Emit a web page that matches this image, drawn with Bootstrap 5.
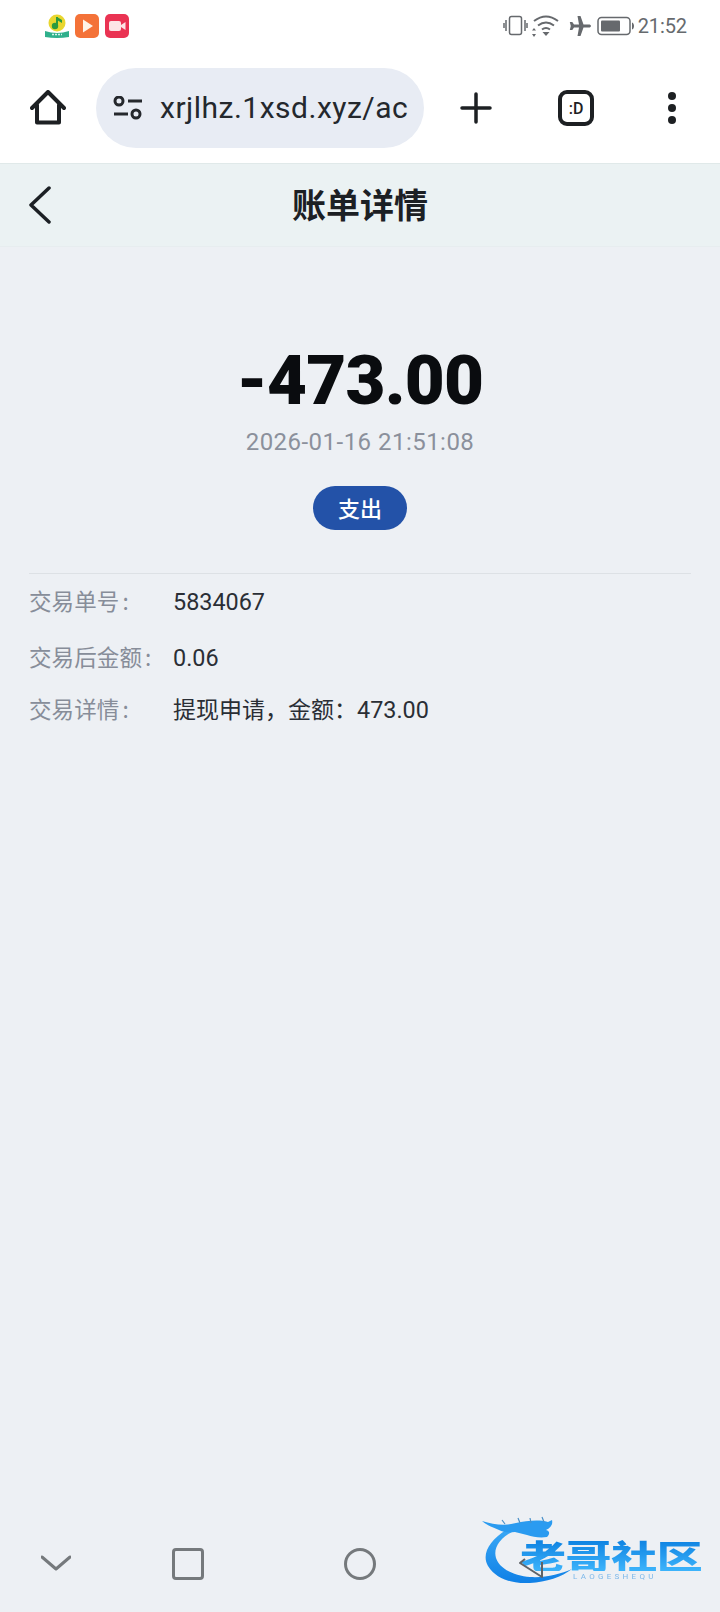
<!DOCTYPE html>
<html lang="zh-CN">
<head>
<meta charset="utf-8">
<title>账单详情</title>
<link href="https://cdn.jsdelivr.net/npm/bootstrap@5.3.0/dist/css/bootstrap.min.css" rel="stylesheet">
<style>
html,body{margin:0;height:100%}
body{width:720px;height:1612px;overflow:hidden;background:#edf0f4;font-family:Roboto,"Noto Sans CJK SC",sans-serif;position:relative}
.cjk{font-family:"Noto Sans CJK SC",Roboto,sans-serif}
.statusbar{height:52px;background:#fff;padding:14px 33px 0 45px}
.noti-gap{gap:6px}
.stat-wifi{margin-left:3px}
.stat-plane{margin-left:10px}
.stat-batt{margin-left:6px}
.stat-time{font-size:20px;line-height:24px;color:#666a6e;margin-left:3px;letter-spacing:-.1px}
.toolbar{height:112px;background:#fff;border-bottom:1px solid #e0e9e9;padding-left:30px}
.urlpill{width:328px;height:80px;border-radius:40px;background:#e8ecf4;margin-left:30px;padding-left:17px;overflow:hidden}
.urltext{font-size:30px;color:#24282d;white-space:nowrap;width:248px;overflow:hidden;margin-left:17px;line-height:40px;letter-spacing:.5px}
.tool-plus{margin-left:36px}
.tool-tab{margin-left:66px}
.tool-dots{margin-left:73px}
.pageheader{height:83px;background:#ebf2f3;border-bottom:1px solid #e7edef;padding-left:29px;position:relative}
.pagetitle{font-size:34px;font-weight:700;color:#1c2024;position:absolute;left:0;right:0;top:15px;line-height:50px;text-align:center;margin:0}
.mainarea{padding:0 29px}
.amountbox{padding-top:84px;height:326px}
.amounttext{font-size:69px;font-weight:900;color:#0a0c0f;line-height:100px;letter-spacing:-.8px}
.datetext{font-size:24px;line-height:32px;color:#8b909c;margin-top:-5px;letter-spacing:.47px}
.kindpill{width:94px;height:44px;border-radius:22px;background:#2352a8;color:#fff;font-size:22px;font-weight:500;line-height:42px;margin-top:28px}
.divline{border-top:1px solid #dde1e5}
.inforow{font-size:22.5px;line-height:32px;color:#2a2e35}
.inforow-a{margin-top:10px}
.inforow-b{margin-top:22px}
.inforow-c{margin-top:18px}
.infolabel{width:144px;color:#878d99;flex:none;letter-spacing:.1px}
.labelcolon{margin-left:3px}
.detailvalue{font-size:23px}
.numtext{font-family:Roboto,sans-serif;font-size:23.4px}
.navbar-sys{height:112px;padding:48px 0 0 41px;margin-top:auto;position:relative;z-index:2}
.nav-sq{margin-left:101px}
.nav-ci{margin-left:140px}
.nav-tri{margin-left:143px;margin-top:-1px}
.watermark{position:absolute;left:482px;top:1512px;width:226px;height:76px;z-index:1;filter:blur(.5px)}
.wm-title{position:absolute;left:38px;top:26px;font-size:46px;line-height:46px;font-weight:900;white-space:nowrap;letter-spacing:-.4px;transform:scaleY(.72);transform-origin:top left;background:linear-gradient(180deg,#0b7fe0,#3db4fb);-webkit-background-clip:text;background-clip:text;color:transparent}
.wm-sub{position:absolute;left:91px;top:61px;font-size:8px;line-height:8px;letter-spacing:3.3px;color:#7db8ea;white-space:nowrap}
</style>
</head>
<body class="d-flex flex-column">
<div class="statusbar d-flex justify-content-between">
  <div class="d-flex noti-gap">
    <svg width="24" height="24" viewBox="0 0 24 24"><circle cx="12" cy="9" r="8.500" fill="#e9d62f"/><path d="M0 17q12 4 24 0v6q-12 2-24 0z" fill="#2fb08c"/><path d="M7 20.500h10" stroke="#d8f3ea" stroke-width="1.500" stroke-dasharray="2 1"/><path d="M12 3v9" stroke="#2b9a3e" stroke-width="2"/><circle cx="10" cy="12" r="3.200" fill="#2b9a3e"/><path d="M12 3l5 3v3l-5-3z" fill="#2b9a3e"/></svg>
    <svg width="24" height="24" viewBox="0 0 24 24"><rect width="24" height="24" rx="5" fill="#f47238"/><path d="M8 5.500l10 6.500-10 6.500z" fill="#fff3e8"/></svg>
    <svg width="24" height="24" viewBox="0 0 24 24"><rect width="24" height="24" rx="5" fill="#ea3353"/><rect x="4" y="7" width="12" height="10" rx="2" fill="#fde4e6"/><path d="M16 11l4.500-3v8L16 13z" fill="#fde4e6"/></svg>
  </div>
  <div class="d-flex">
    <svg width="25" height="24" viewBox="0 0 25 24" fill="none" stroke="#66696d" stroke-width="1.500"><rect x="6.500" y="2.500" width="12" height="18" rx="2"/><path d="M3 6v11M1 9v5M22 6v11M24 9v5"/></svg>
    <svg class="stat-wifi" width="28" height="24" viewBox="0 0 28 24" fill="none" stroke="#66696d" stroke-width="2"><path d="M3 7q12-9 24 0M7 11.500q8-6 16 0M11 15.500q4-3 8 0"/><path d="M15 22l-3.500-4h7z" fill="#66696d" stroke="none"/><path d="M3 14l-2 2.500h4zM3 23l-2-3h4z" fill="#66696d" stroke="none"/></svg>
    <svg class="stat-plane" width="22" height="24" viewBox="0 0 22 24"><path d="M8.500 2h3l3 8.500h5.500c1 0 2 .7 2 1.500s-1 1.500-2 1.500h-5.500l-3 8.500h-3l1.500-8.500h-5l-1.700 2.500H.800l1-4-1-4h2.500l1.700 2.500h5z" fill="#66696d"/></svg>
    <svg class="stat-batt" width="38" height="24" viewBox="0 0 38 24" fill="none"><rect x="1" y="3.500" width="32" height="17" rx="3.500" stroke="#66696d" stroke-width="1.500"/><rect x="4" y="6.500" width="19" height="11" rx="1" fill="#66696d"/><path d="M35 8.500c1.500.5 2 2 2 3.500s-.5 3-2 3.500z" fill="#66696d"/></svg>
    <div class="stat-time">21:52</div>
  </div>
</div>
<div class="toolbar d-flex align-items-center">
  <svg width="36" height="36" viewBox="0 0 36 36" fill="none" stroke="#1d2023" stroke-width="4" stroke-linejoin="round" stroke-linecap="round"><path d="M2 18L18 2l16 16"/><path d="M7 15v17.500h22V15"/></svg>
  <div class="urlpill d-flex align-items-center">
    <svg width="30" height="24" viewBox="0 0 30 24" fill="none" stroke="#25282d" stroke-width="3"><circle cx="6" cy="5" r="4"/><path d="M15 5h14M1 18h14"/><circle cx="23" cy="18" r="4"/></svg>
    <div class="urltext">xrjlhz.1xsd.xyz/ac</div>
  </div>
  <svg class="tool-plus" width="32" height="32" viewBox="0 0 32 32" stroke="#1d2023" stroke-width="3.500" stroke-linecap="round"><path d="M16 2v28M2 16h28"/></svg>
  <svg class="tool-tab" width="36" height="36" viewBox="0 0 36 36"><rect x="2" y="2" width="32" height="32" rx="7" fill="none" stroke="#1d2023" stroke-width="4"/><text x="18" y="24" text-anchor="middle" font-family="Roboto,sans-serif" font-size="16" font-weight="500" fill="#1d2023">:D</text></svg>
  <svg class="tool-dots" width="10" height="34" viewBox="0 0 10 34" fill="#1d2023"><circle cx="5" cy="5" r="4"/><circle cx="5" cy="17" r="4"/><circle cx="5" cy="29" r="4"/></svg>
</div>
<header class="pageheader d-flex align-items-center">
  <svg width="22" height="38" viewBox="0 0 22 38" fill="none" stroke="#1c2024" stroke-width="3.500" stroke-linecap="round" stroke-linejoin="round"><path d="M20 2L2 19l18 17"/></svg>
  <h1 class="pagetitle cjk">账单详情</h1>
</header>
<main class="mainarea">
  <section class="amountbox text-center d-flex flex-column align-items-center">
    <div class="amounttext">-473.00</div>
    <div class="datetext">2026-01-16 21:51:08</div>
    <div class="kindpill cjk">支出</div>
  </section>
  <div class="divline"></div>
  <div class="inforow inforow-a d-flex align-items-baseline cjk"><span class="infolabel">交易单号<span class="labelcolon">:</span></span><span class="numtext">5834067</span></div>
  <div class="inforow inforow-b d-flex align-items-baseline cjk"><span class="infolabel">交易后金额<span class="labelcolon">:</span></span><span class="numtext">0.06</span></div>
  <div class="inforow inforow-c d-flex align-items-baseline cjk"><span class="infolabel">交易详情<span class="labelcolon">:</span></span><span class="detailvalue">提现申请&#xFF0C;金额&#xFF1A;<span class="numtext">473.00</span></span></div>
</main>
<nav class="navbar-sys d-flex align-items-start">
  <svg width="30" height="32" viewBox="0 0 30 32" fill="none" stroke="#75797c" stroke-width="3" stroke-linecap="round" stroke-linejoin="round"><path d="M1 9l14 12 14-12"/></svg>
  <svg class="nav-sq" width="32" height="32" viewBox="0 0 32 32" fill="none" stroke="#75797c" stroke-width="3"><rect x="1.500" y="1.500" width="29" height="29" rx="2.500"/></svg>
  <svg class="nav-ci" width="32" height="32" viewBox="0 0 32 32" fill="none" stroke="#75797c" stroke-width="3"><circle cx="16" cy="16" r="14.500"/></svg>
  <svg class="nav-tri" width="26" height="32" viewBox="0 0 26 32" fill="none" stroke="#5f6367" stroke-width="2" stroke-linejoin="round"><path d="M6 12l-5 4 22 14v-15"/></svg>
</nav>
<div class="watermark">
  <svg width="226" height="76" viewBox="0 0 226 76" class="d-block">
    <defs><linearGradient id="wmg" x1="0" y1="0" x2="0" y2="1"><stop offset="0" stop-color="#3aa8f5"/><stop offset="1" stop-color="#0f80e6"/></linearGradient></defs>
    <path d="M24 18C8 28-1 42 6 54c8 13 24 18 42 17 16-1 32-6 42-14-12 5-26 9-42 8C34 64 18 58 14 46 11 36 18 26 30 20z" fill="url(#wmg)"/>
    <path d="M0 9c12 4 24 5 34 2 10-2 22-4 32-1l4-2c1 4-1 8-6 10 4 1 4 4 1 7-7 1-14 0-20-2l-12-3c-8 1-12 0-16-2C10 15 4 13 0 9z" fill="#2a9bf0"/>
    <path d="M20 8l3 4M36 6l2 5M48 6l1 5M60 5l2 5" stroke="#4a90c8" stroke-width="1.200"/>
  </svg>
  <div class="wm-title cjk">老哥社区</div>
  <div class="wm-sub">LAOGESHEQU</div>
</div>
</body>
</html>
